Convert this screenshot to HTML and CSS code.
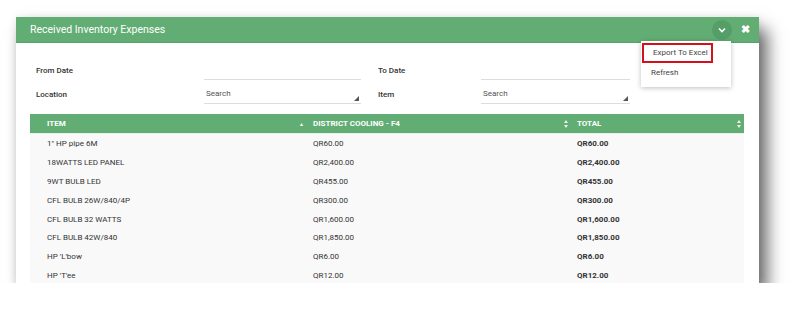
FILE: index.html
```html
<!DOCTYPE html>
<html lang="en">
<head>
  <meta charset="UTF-8">
  <title>Received Inventory Expenses</title>
  <link rel="stylesheet" href="styles.css">
</head>
<body>
  <div class="panel">
    <div class="panel-head">
      <span class="panel-title">Received Inventory Expenses</span>
      <div class="head-tools">
        <span class="tool-toggle">
          <svg width="8" height="6" viewBox="0 0 8 6"><path d="M1 1.5 L4 4.5 L7 1.5" fill="none" stroke="#fff" stroke-width="1.6"/></svg>
        </span>
        <span class="tool-close">✖</span>
      </div>
    </div>

    <!-- menu opened from the toggle -->
    <div class="tool-menu">
      <div class="menu-item selected">Export To Excel</div>
      <div class="menu-item">Refresh</div>
    </div>

    <div class="panel-body">
      <div class="filters">
        <label class="f-label">From Date</label>
        <div class="f-input"></div>
        <label class="f-label right">To Date</label>
        <div class="f-input"></div>

        <label class="f-label">Location</label>
        <div class="f-input f-select">Search</div>
        <label class="f-label right">Item</label>
        <div class="f-input f-select">Search</div>
      </div>

      <div class="grid">
        <div class="grid-row grid-head">
          <div class="cell first"><span>ITEM</span><span class="sort">▲</span></div>
          <div class="cell"><span>DISTRICT COOLING - F4</span><span class="sort both"></span></div>
          <div class="cell"><span>TOTAL</span><span class="sort both"></span></div>
        </div>
        <div class="grid-row"><div class="cell first">1" HP pipe 6M</div><div class="cell">QR60.00</div><div class="cell total">QR60.00</div></div>
        <div class="grid-row"><div class="cell first">18WATTS LED PANEL</div><div class="cell">QR2,400.00</div><div class="cell total">QR2,400.00</div></div>
        <div class="grid-row"><div class="cell first">9WT BULB LED</div><div class="cell">QR455.00</div><div class="cell total">QR455.00</div></div>
        <div class="grid-row"><div class="cell first">CFL BULB 26W/840/4P</div><div class="cell">QR300.00</div><div class="cell total">QR300.00</div></div>
        <div class="grid-row"><div class="cell first">CFL BULB 32 WATTS</div><div class="cell">QR1,600.00</div><div class="cell total">QR1,600.00</div></div>
        <div class="grid-row"><div class="cell first">CFL BULB 42W/840</div><div class="cell">QR1,850.00</div><div class="cell total">QR1,850.00</div></div>
        <div class="grid-row"><div class="cell first">HP 'L'bow</div><div class="cell">QR6.00</div><div class="cell total">QR6.00</div></div>
        <div class="grid-row"><div class="cell first">HP 'T'ee</div><div class="cell">QR12.00</div><div class="cell total">QR12.00</div></div>
      </div>
    </div>
  </div>
</body>
</html>
```

FILE: styles.css
```css
body {
  margin: 0;
  background: #fff;
  font-family: Roboto, "Liberation Sans", sans-serif;
  color: #333;
}
.panel {
  position: relative;
  margin: 17px 0 0 16px;
  width: 743px;
  height: 266px;
  background: #fff;
  overflow: hidden;
  box-shadow: 8px 12px 16px rgba(0, 0, 0, 0.6), 0 0 8px rgba(0, 0, 0, 0.08);
}
.panel-head {
  height: 26px;
  background: #62ad74;
  border-bottom: 1px solid #58a26a;
  box-sizing: border-box;
  display: flex;
  align-items: center;
  justify-content: space-between;
  padding: 0 9px 0 14px;
}
.panel-title {
  color: #fff;
  font-size: 10.5px;
}
.head-tools {
  display: flex;
  align-items: center;
  gap: 9px;
}
.tool-toggle {
  width: 20px;
  height: 20px;
  border-radius: 50%;
  background: #559e67;
  display: flex;
  align-items: center;
  justify-content: center;
}
.tool-close {
  color: #fff;
  font-size: 11px;
  font-weight: bold;
}
.tool-menu {
  position: absolute;
  left: 625px;
  top: 24px;
  width: 90px;
  padding: 2px 0 4px;
  background: #fff;
  box-shadow: 0 1px 5px rgba(0, 0, 0, 0.25);
  z-index: 2;
}
.menu-item {
  font-size: 8px;
  color: #444;
  padding: 0 0 0 10px;
  height: 20px;
  line-height: 20px;
}
.menu-item.selected {
  margin-left: 1px;
  width: 71px;
  padding-left: 9px;
  box-sizing: border-box;
  border: 2px solid #d3111c;
  line-height: 16px;
}
.panel-body {
  padding: 19px 15px 0 14px;
}
.filters {
  display: grid;
  grid-template-columns: 168px 157px 120px 149px;
  row-gap: 6px;
  margin-left: 6px;
}
.f-label {
  font-size: 8px;
  font-weight: 500;
  color: #333;
  height: 17px;
  line-height: 17px;
}
.f-label.right {
  padding-left: 17px;
}
.f-input {
  height: 17px;
  border-bottom: 1px solid #ddd;
  font-size: 8px;
  color: #555;
  line-height: 16px;
  padding-left: 2px;
  position: relative;
}
.f-select::after {
  content: "";
  position: absolute;
  right: 2px;
  bottom: 2px;
  border-left: 5px solid transparent;
  border-bottom: 5px solid #555;
}
.grid {
  margin-top: 10px;
  background: #f9f9f9;
}
.grid-row {
  display: grid;
  grid-template-columns: 277px 264px 1fr;
  height: 18.9px;
  align-items: center;
  font-size: 8px;
}
.grid-head {
  height: 19px;
  background: #62ad74;
  border-bottom: 1px solid #e9f3eb;
  color: #fff;
  font-weight: bold;
}
.cell {
  padding-left: 6px;
  display: flex;
  justify-content: space-between;
  align-items: center;
}
.cell.first {
  padding-left: 17px;
}
.grid-head .cell {
  padding-right: 3px;
}
.sort {
  font-size: 5px;
  color: #fff;
}
.sort.both {
  width: 4px;
  height: 8px;
  position: relative;
}
.sort.both::before,
.sort.both::after {
  content: "";
  position: absolute;
  left: 0;
  border-left: 2px solid transparent;
  border-right: 2px solid transparent;
}
.sort.both::before {
  top: 0;
  border-bottom: 3px solid #e8f2ea;
}
.sort.both::after {
  bottom: 0;
  border-top: 3px solid #e8f2ea;
}
.total {
  font-weight: bold;
}
```
